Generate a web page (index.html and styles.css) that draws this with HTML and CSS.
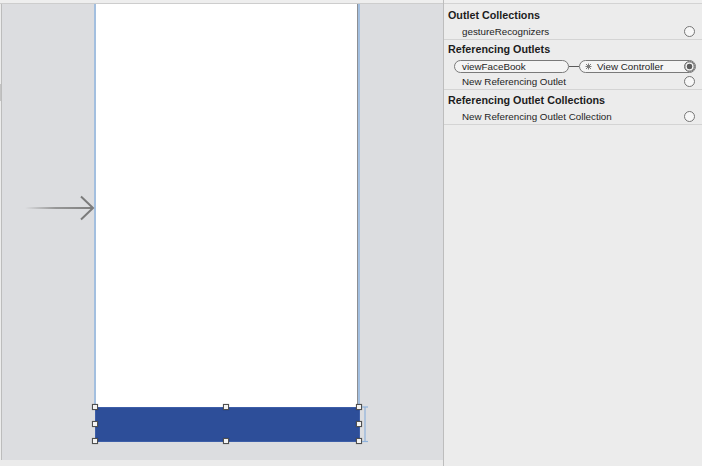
FILE: index.html
```html
<!DOCTYPE html>
<html>
<head>
<meta charset="utf-8">
<link rel="stylesheet" href="styles.css">
</head>
<body>
<div class="app">
  <div class="canvas">
    <div class="canvas-top"></div>
    <div class="stage">
      <svg class="entry-arrow" width="74" height="28" viewBox="0 0 74 28">
        <defs>
          <linearGradient id="fade" gradientUnits="userSpaceOnUse" x1="3" y1="0" x2="71" y2="0">
            <stop offset="0" stop-color="#8a8a8a" stop-opacity="0"/>
            <stop offset="0.45" stop-color="#8a8a8a" stop-opacity="0.85"/>
            <stop offset="1" stop-color="#7e7e7e"/>
          </linearGradient>
        </defs>
        <rect x="3" y="13" width="68" height="2" fill="url(#fade)"/>
        <polyline points="59,2.5 71,14 59,25.5" fill="none" stroke="#7b7b7b" stroke-width="2"/>
      </svg>
      <div class="device">
        <div class="screen"></div>
        <div class="bar">
          <span class="handle h-tl"></span>
          <span class="handle h-tm"></span>
          <span class="handle h-tr"></span>
          <span class="handle h-ml"></span>
          <span class="handle h-mr"></span>
          <span class="handle h-bl"></span>
          <span class="handle h-bm"></span>
          <span class="handle h-br"></span>
          <svg class="bracket" width="8" height="37" viewBox="0 0 8 37">
            <line x1="4" y1="1" x2="4" y2="36" stroke="#8fb2db" stroke-width="1.2"/>
            <line x1="1" y1="1" x2="7" y2="1" stroke="#8fb2db" stroke-width="1.2"/>
            <line x1="1" y1="35.5" x2="7" y2="35.5" stroke="#8fb2db" stroke-width="1.2"/>
          </svg>
        </div>
      </div>
    </div>
    <div class="canvas-bottom"></div>
  </div>

  <aside class="panel">
    <section class="group g1">
      <h3 class="heading">Outlet Collections</h3>
      <div class="row"><span class="label">gestureRecognizers</span><span class="radio"></span></div>
    </section>
    <section class="group g2">
      <h3 class="heading">Referencing Outlets</h3>
      <div class="row conn">
        <span class="pill source">viewFaceBook</span>
        <span class="wire"></span>
        <span class="pill target">
          <svg class="x-icon" width="7" height="7" viewBox="0 0 7 7">
            <path d="M1 1L6 6M6 1L1 6M3.5 0.5V6.5M0.5 3.5H6.5" stroke="#7c7c7c" stroke-width="1"/>
          </svg>
          <span class="label">View Controller</span>
          <span class="radio on"></span>
        </span>
      </div>
      <div class="row"><span class="label">New Referencing Outlet</span><span class="radio"></span></div>
    </section>
    <section class="group g3">
      <h3 class="heading">Referencing Outlet Collections</h3>
      <div class="row"><span class="label">New Referencing Outlet Collection</span><span class="radio"></span></div>
    </section>
  </aside>
</div>
</body>
</html>
```

FILE: styles.css
```css
* { box-sizing: border-box; }

html, body {
  margin: 0;
  padding: 0;
  width: 702px;
  height: 466px;
  overflow: hidden;
  background: #ececec;
  font-family: "Liberation Sans", Arial, sans-serif;
  color: #1e1e1e;
}

.app {
  display: flex;
  width: 702px;
  height: 466px;
}

/* ---------- canvas ---------- */
.canvas {
  position: relative;
  width: 444px;
  height: 466px;
  display: flex;
  flex-direction: column;
  background: #ececec;
  border-right: 1px solid #bdbdbd;
}

.canvas::before {
  content: "";
  position: absolute;
  left: 0;
  top: 84px;
  width: 2px;
  height: 17px;
  background: #c4c4c4;
}

.canvas-top {
  height: 4px;
  background: #eeeeee;
  border-bottom: 1px solid #cdcdcd;
}

.stage {
  position: relative;
  flex: 1;
  margin-left: 1px;
  background: #dcdde0;
  border-left: 1px solid #bcbcbc;
}

.canvas-bottom {
  height: 6px;
  background: #ebebeb;
}

.entry-arrow {
  position: absolute;
  left: 20px;
  top: 190px;
}

.device {
  margin-left: 92px;
  width: 266px;
}

.screen {
  height: 403px;
  background: #ffffff;
  border-left: 2px solid #a3bfdf;
  border-right: 2px solid #a3bfdf;
  box-shadow: inset -1px 0 0 #8d8f93;
}

.bar {
  position: relative;
  margin-left: 1px;
  width: 265px;
  height: 35px;
  background: #2d4e99;
  box-shadow: inset 0 0 0 1px #3d5ea8;
}

.handle {
  position: absolute;
  width: 6px;
  height: 6px;
  background: #f3f3f3;
  border: 1px solid #505050;
  box-shadow: 0 0 1px rgba(0,0,0,0.35);
}
.h-tl { left: -3px; top: -3px; }
.h-tm { left: 128px; top: -3px; }
.h-tr { left: 261px; top: -3px; }
.h-ml { left: -3px; top: 14px; }
.h-mr { left: 261px; top: 14px; }
.h-bl { left: -3px; top: 31px; }
.h-bm { left: 128px; top: 31px; }
.h-br { left: 261px; top: 31px; }

.bracket {
  position: absolute;
  left: 266px;
  top: -1px;
}

/* ---------- connections panel ---------- */
.panel {
  flex: 1;
  background: #ececec;
  border-top: 3px solid #efefef;
  display: flex;
  flex-direction: column;
}

.panel::before {
  content: "";
  display: block;
  height: 1px;
  background: #d3d3d3;
}

.group {
  border-bottom: 1px solid #d4d4d4;
  padding-top: 1px;
}
.g1 { padding-top: 3px; }
.g3 { padding-top: 2px; }

.heading {
  margin: 0;
  height: 16px;
  line-height: 16px;
  padding-left: 4px;
  font-size: 10.75px;
  font-weight: bold;
  color: #1c1c1c;
}

.row {
  display: flex;
  align-items: center;
  height: 16px;
  padding-left: 18px;
  padding-right: 7px;
  font-size: 9.8px;
}

.row .label {
  flex: 1;
}

.radio {
  width: 11px;
  height: 11px;
  border-radius: 50%;
  border: 1px solid #767676;
  background: #f7f7f7;
  flex: none;
}

.radio.on {
  background: radial-gradient(circle, #5d5d5d 0 2.6px, #f2f2f2 3.1px 3.6px, #bdbdbd 4px);
  border-color: #6c6c6c;
}

.row.conn {
  padding-left: 10px;
  padding-right: 6px;
  padding-top: 2px;
}

.pill {
  display: flex;
  align-items: center;
  height: 13px;
  border: 1px solid #7a7a7a;
  border-radius: 7px;
  background: #f4f4f4;
}

.pill.source {
  width: 115px;
  padding-left: 7px;
  flex: none;
}

.wire {
  width: 10px;
  height: 1px;
  background: #5a5a5a;
  flex: none;
}

.pill.target {
  flex: 1;
  padding-left: 5px;
  padding-right: 0;
}

.x-icon {
  margin-right: 5px;
  flex: none;
}

.pill.target .label {
  flex: 1;
}

.pill.target .radio {
  margin-right: 0;
}
```
